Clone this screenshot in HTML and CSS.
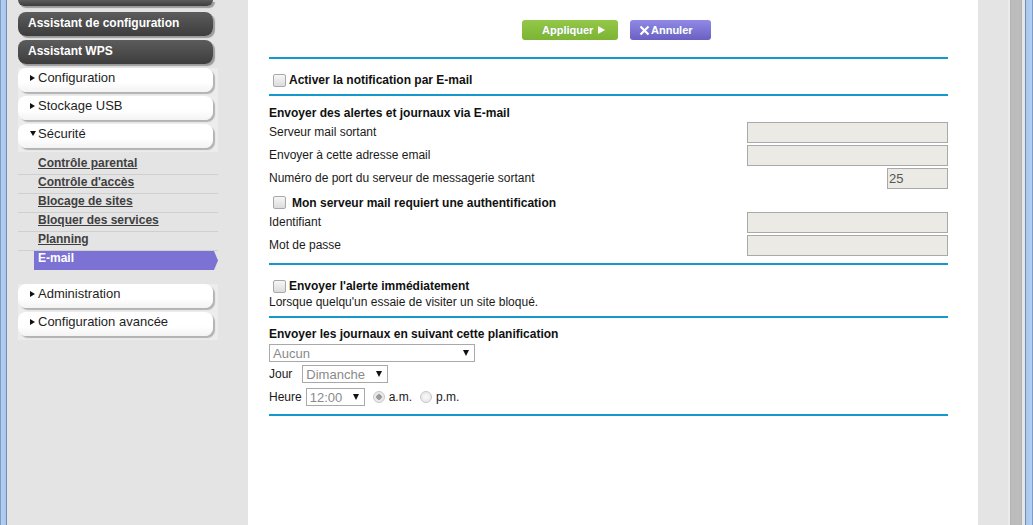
FILE: index.html
```html
<!DOCTYPE html>
<html lang="fr">
<head>
<meta charset="utf-8">
<title>E-mail</title>
<link rel="stylesheet" href="styles.css">
</head>
<body>
<div class="win">
  <div class="edge-l"></div>
  <nav class="side">
    <div class="dbtn dbtn-top"></div>
    <div class="dbtn">Assistant de configuration</div>
    <div class="dbtn">Assistant WPS</div>
    <div class="wgroup">
      <div class="wbtn"><span class="tri-r"></span>Configuration</div>
      <div class="wbtn"><span class="tri-r"></span>Stockage USB</div>
      <div class="wbtn"><span class="tri-d"></span>Sécurité</div>
    </div>
    <ul class="sub">
      <li><a>Contrôle parental</a></li>
      <li><a>Contrôle d'accès</a></li>
      <li><a>Blocage de sites</a></li>
      <li><a>Bloquer des services</a></li>
      <li><a>Planning</a></li>
      <li class="active">E-mail</li>
    </ul>
    <div class="wgroup wgroup-2">
      <div class="wbtn"><span class="tri-r"></span>Administration</div>
      <div class="wbtn"><span class="tri-r"></span>Configuration avancée</div>
    </div>
  </nav>
  <main class="content">
    <div class="actions">
      <button class="btn btn-apply">Appliquer<span class="play"></span></button>
      <button class="btn btn-cancel"><svg class="x" width="11" height="11" viewBox="0 0 11 11"><path d="M1.5 1.5 L9.5 9.5 M9.5 1.5 L1.5 9.5" stroke="#fff" stroke-width="2.2" fill="none"/></svg>Annuler</button>
    </div>
    <div class="rule"></div>
    <div class="check-row first">
      <span class="cb"></span><b>Activer la notification par E-mail</b>
    </div>
    <div class="rule"></div>
    <div class="heading">Envoyer des alertes et journaux via E-mail</div>
    <div class="field"><span>Serveur mail sortant</span><span class="inp"></span></div>
    <div class="field"><span>Envoyer à cette adresse email</span><span class="inp"></span></div>
    <div class="field"><span>Numéro de port du serveur de messagerie sortant</span><span class="inp inp-short">25</span></div>
    <div class="check-row auth">
      <span class="cb"></span><b class="wide">Mon serveur mail requiert une authentification</b>
    </div>
    <div class="field"><span>Identifiant</span><span class="inp"></span></div>
    <div class="field"><span>Mot de passe</span><span class="inp"></span></div>
    <div class="rule r3"></div>
    <div class="alert-block">
      <div class="check-line"><span class="cb"></span><b>Envoyer l'alerte immédiatement</b></div>
      <div class="line">Lorsque quelqu'un essaie de visiter un site bloqué.</div>
    </div>
    <div class="rule"></div>
    <div class="heading h2">Envoyer les journaux en suivant cette planification</div>
    <div class="sel sel-main"><span>Aucun</span><span class="arr"></span></div>
    <div class="sched-row jour"><span>Jour</span><div class="sel sel-day"><span>Dimanche</span><span class="arr"></span></div></div>
    <div class="sched-row heure"><span>Heure</span><div class="sel sel-hour"><span>12:00</span><span class="arr"></span></div>
      <span class="radio on"></span><span class="rlab">a.m.</span>
      <span class="radio"></span><span class="rlab">p.m.</span>
    </div>
    <div class="rule r5"></div>
  </main>
  <div class="gutter"></div>
  <div class="scroll"></div>
  <div class="edge-r"></div>
</div>
</body>
</html>
```
FILE: styles.css
```css
html, body {
  margin: 0;
  padding: 0;
  height: 525px;
  overflow: hidden;
}
body {
  font-family: "Liberation Sans", Arial, sans-serif;
  font-size: 12px;
  color: #1a1a1a;
}
.win {
  display: flex;
  height: 525px;
}
.edge-l {
  width: 7px;
  flex: none;
  background: linear-gradient(to right, #7f9cc4 0, #7f9cc4 1px, #b3cff0 1px, #aac8ec 6px, #6f8db8 6px, #6f8db8 7px);
}
.side {
  width: 241px;
  flex: none;
  background: #e4e4e4;
  padding-left: 11px;
  box-sizing: border-box;
}
.dbtn {
  width: 195px;
  height: 24px;
  box-sizing: border-box;
  border-radius: 8px;
  background: linear-gradient(#5c5c5c, #3d3d3d);
  box-shadow: 2px 2px 1px #9b9b9b;
  color: #fff;
  font-weight: bold;
  line-height: 22px;
  padding-left: 10px;
  margin-bottom: 4px;
}
.dbtn-top {
  height: 6px;
  border-radius: 0 0 8px 8px;
  margin-bottom: 6px;
}
.wgroup {
  width: 200px;
  background: #ececec;
  padding-bottom: 1px;
}
.wbtn {
  width: 195px;
  height: 24px;
  box-sizing: border-box;
  border-radius: 8px;
  background: linear-gradient(#ffffff, #ffffff 60%, #f3f3f3);
  box-shadow: 2px 2px 1px #b3b3b3;
  color: #1e1e1e;
  font-size: 13px;
  line-height: 16px;
  padding-left: 12px;
  padding-bottom: 5px;
  margin-bottom: 4px;
  display: flex;
  align-items: center;
}
.wgroup .wbtn:last-child { margin-bottom: 3px; }
.tri-r {
  width: 0;
  height: 0;
  border-left: 5px solid #111;
  border-top: 3.5px solid transparent;
  border-bottom: 3.5px solid transparent;
  margin-right: 3px;
}
.tri-d {
  width: 0;
  height: 0;
  border-top: 5px solid #111;
  border-left: 3.5px solid transparent;
  border-right: 3.5px solid transparent;
  margin-right: 2px;
}
.sub {
  list-style: none;
  margin: 0;
  padding: 4px 0 0 0;
  width: 200px;
}
.sub li {
  height: 18px;
  line-height: 14px;
  border-bottom: 1px solid #cfcfcf;
  padding-left: 20px;
  font-weight: bold;
}
.sub li a {
  color: #3f3f3f;
  text-decoration: underline;
}
.sub li.active {
  border-bottom: none;
  margin-left: 16px;
  padding-left: 4px;
  height: 19px;
  color: #fff;
  background: #7b72d4;
  clip-path: polygon(0 0, calc(100% - 4px) 0, 100% 50%, calc(100% - 4px) 100%, 0 100%);
}
.wgroup-2 {
  margin-top: 14px;
}
.content {
  width: 730px;
  flex: none;
  background: #fff;
  box-sizing: border-box;
  padding: 20px 30px 0 21px;
}
.actions {
  display: flex;
  padding-left: 253px;
  gap: 12px;
  height: 20px;
  margin-bottom: 17px;
}
.btn {
  border: none;
  border-radius: 3px;
  height: 20px;
  padding: 0;
  font-family: "Liberation Sans", Arial, sans-serif;
  font-size: 11px;
  font-weight: bold;
  color: #fff;
  display: flex;
  align-items: center;
  justify-content: flex-start;
  box-sizing: border-box;
  text-shadow: 0 0 1px rgba(120,160,200,0.6);
}
.btn-apply {
  width: 96px;
  padding-left: 20px;
  background: linear-gradient(#93c748, #7db433);
}
.play {
  width: 0;
  height: 0;
  border-left: 7px solid #fff;
  border-top: 4px solid transparent;
  border-bottom: 4px solid transparent;
  margin-left: 5px;
}
.btn-cancel {
  width: 81px;
  background: linear-gradient(#9189e6, #6a60c2);
  padding-left: 9px;
}
.x { margin-right: 1px; }
.rule {
  height: 2px;
  background: #1399cc;
}
.check-row {
  display: flex;
  align-items: center;
  padding-left: 4px;
}
.check-row.first {
  height: 35px;
  padding-top: 7px;
  box-sizing: border-box;
}
.check-row.auth {
  height: 21px;
  padding-top: 4px;
  box-sizing: border-box;
}
.cb {
  width: 11px;
  height: 11px;
  border: 1px solid #a8a8a8;
  border-radius: 2px;
  background: linear-gradient(#f6f6f6, #dcdcdc);
  margin-right: 3px;
  flex: none;
}
b { font-weight: bold; color: #111; }
b.wide { margin-left: 3px; }
.heading {
  font-weight: bold;
  color: #111;
  line-height: 16px;
  padding-top: 9px;
  height: 16px;
}
.field {
  height: 23px;
  display: flex;
  align-items: center;
  justify-content: space-between;
}
.field > span:first-child {
  padding-bottom: 1px;
}
.inp {
  width: 201px;
  height: 21px;
  box-sizing: border-box;
  border: 1px solid #a9a9a9;
  background: #ebeae4;
  color: #555;
  font-size: 13px;
  line-height: 19px;
  padding-left: 1px;
}
.inp-short {
  width: 61px;
}
.r3 { margin-top: 6px; }
.alert-block {
  padding: 13px 0 6px 0;
}
.check-line {
  display: flex;
  align-items: center;
  height: 16px;
  padding-left: 4px;
}
.line {
  line-height: 16px;
}
.h2 {
  padding-top: 8px;
  height: 18px;
}
.sel {
  height: 18px;
  box-sizing: border-box;
  border: 1px solid #a9a9a9;
  background: #fff;
  display: flex;
  align-items: center;
  justify-content: space-between;
  color: #8a8a8a;
  font-size: 13px;
  padding: 0 5px 0 3px;
}
.sel-main { width: 206px; }
.arr {
  width: 0;
  height: 0;
  border-top: 6px solid #111;
  border-left: 3.5px solid transparent;
  border-right: 3.5px solid transparent;
}
.sched-row {
  display: flex;
  align-items: center;
  height: 18px;
}
.jour { margin-top: 3px; }
.jour .sel { width: 86px; margin-left: 10px; }
.heure { margin-top: 5px; }
.heure .sel { width: 59px; margin-left: 4px; }
.radio {
  width: 10px;
  height: 10px;
  border-radius: 50%;
  border: 1px solid #c8c8c8;
  background: radial-gradient(#fafafa, #e2e2e2);
  margin-left: 8px;
  margin-right: 4px;
  box-sizing: content-box;
}
.radio.on {
  background: radial-gradient(#9a9a9a 0, #9a9a9a 2.5px, #e9e9e9 3px);
}
.rlab { color: #1a1a1a; }
.r5 { margin-top: 8px; }
.gutter {
  width: 30px;
  flex: none;
  background: #e4e4e4;
}
.scroll {
  width: 17px;
  flex: none;
  background: linear-gradient(to right, #ececec 0, #ececec 2px, #a9a9a9 2px, #bcbcbc 3px, #bcbcbc 13px, #a9a9a9 14px, #e6e6e6 14px);
}
.edge-r {
  width: 8px;
  flex: none;
  background: linear-gradient(to right, #6f8db8 0, #6f8db8 1px, #aac8ec 1px, #b3cff0 7px, #7f9cc4 7px);
}
```
